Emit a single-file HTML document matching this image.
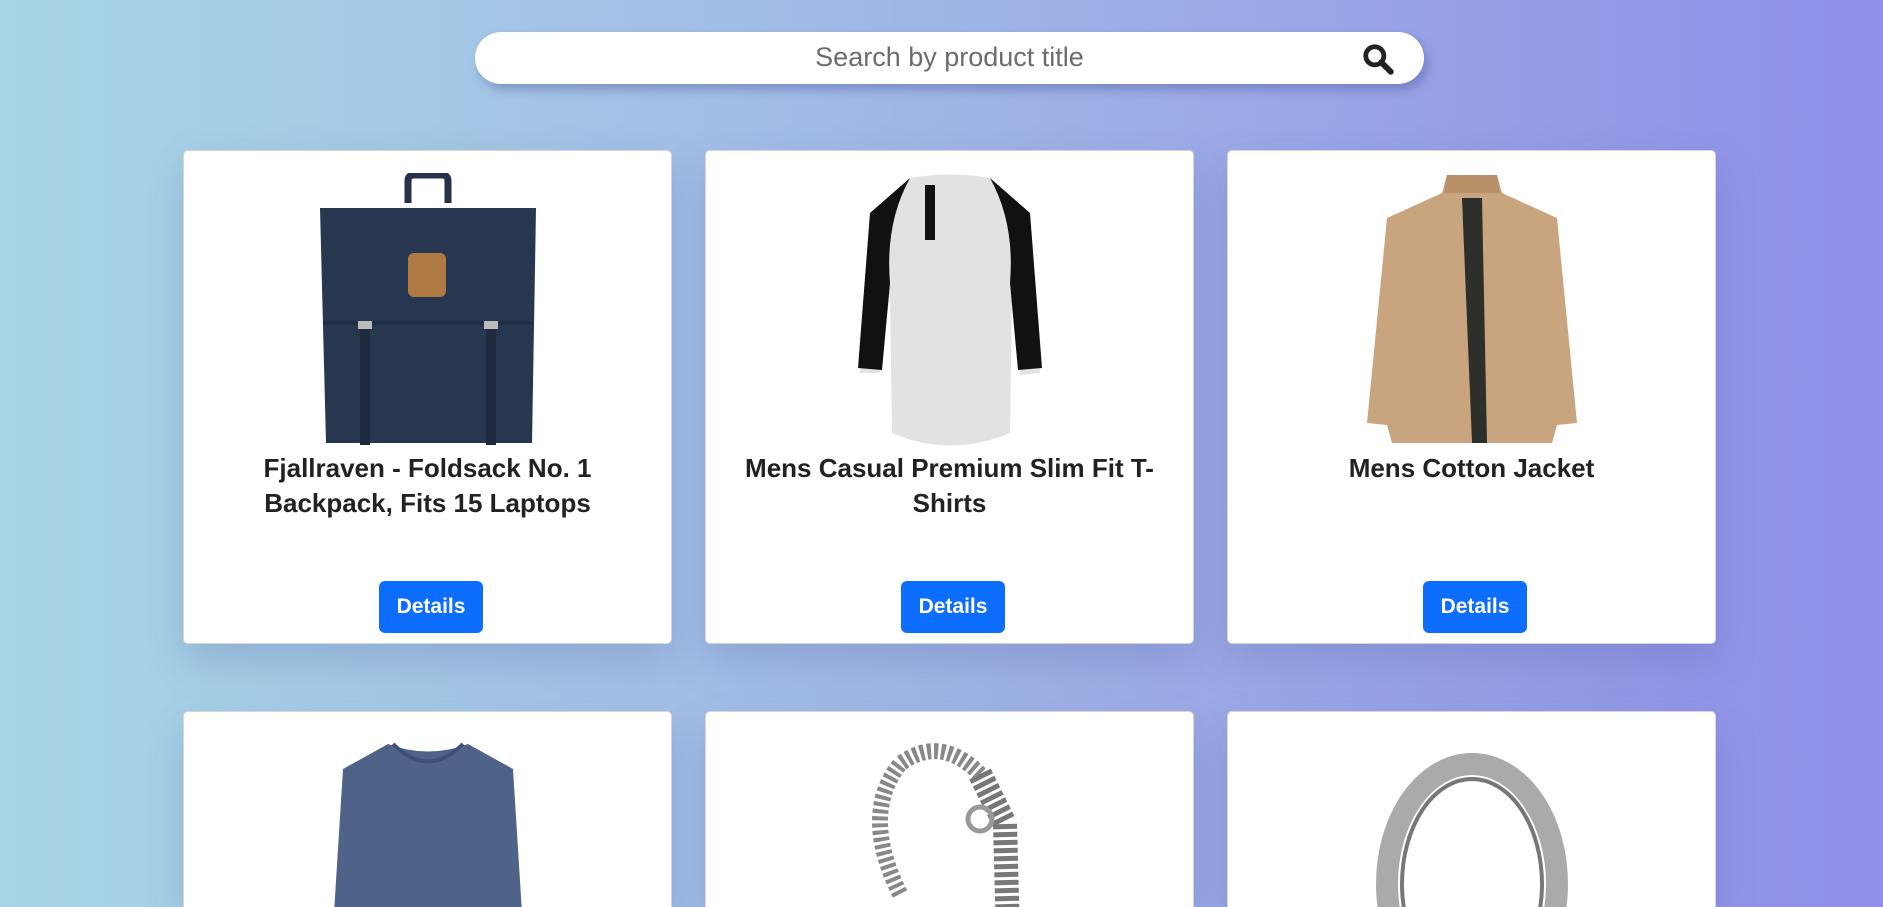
<!DOCTYPE html>
<html style="width:1883px;height:907px;overflow:hidden"><head><style>
*{box-sizing:border-box;margin:0;padding:0}
html,body{width:1883px;height:907px;overflow:hidden}
body{font-family:"Segoe UI","Liberation Sans",sans-serif;background:linear-gradient(90deg,#a8d6e6 0%,#a2bde6 40%,#9aa6e6 70%,#8f8ee8 100%);position:relative}
.search{position:absolute;left:475px;top:32px;width:949px;height:52px;background:#fff;border-radius:26px;box-shadow:4px 6px 10px rgba(60,70,140,.35)}
.search span{position:absolute;left:0;right:0;top:10px;text-align:center;font-size:27px;color:#6c6c6c}
.search svg{position:absolute;right:30px;top:11px}
.card{position:absolute;width:489px;height:494px;background:#fff;border:1px solid #d6d6d6;border-radius:5px;box-shadow:0 18px 40px rgba(80,90,160,.25);overflow:hidden}
.card.r2{height:196px;border-bottom:none;border-radius:5px 5px 0 0}
.card .img{position:absolute;left:0;right:0;top:22px;height:275px;display:flex;justify-content:center}
.card h3{position:absolute;left:20px;right:20px;top:300px;text-align:center;font-size:26px;font-weight:600;line-height:35px;color:#222}
.card .btn{position:absolute;left:195px;top:430px;width:104px;height:52px;background:#0d6efd;color:#fff;border-radius:6px;font-size:21px;font-weight:600;text-align:center;line-height:52px}
</style></head><body>
<div class="search"><span>Search by product title</span>
<svg width="32" height="32" viewBox="0 0 30 30"><circle cx="12" cy="12" r="8.5" fill="none" stroke="#222" stroke-width="4.5"/><line x1="18" y1="18" x2="27" y2="27" stroke="#222" stroke-width="5.5" stroke-linecap="round"/></svg></div>

<div class="card" style="left:183px;top:150px">
<div class="img"><svg width="220" height="275" viewBox="0 0 220 275"><path d="M90 30 V8 Q90 2 96 2 H124 Q130 2 130 8 V30" fill="none" stroke="#25324a" stroke-width="7"/><path d="M2 35 L218 35 L214 270 L8 270 Z" fill="#27374f"/><path d="M5 150 L215 150" stroke="#1f2d42" stroke-width="3"/><rect x="90" y="80" width="38" height="44" rx="6" fill="#b07a45"/><rect x="42" y="152" width="10" height="120" fill="#1e2a3e"/><rect x="168" y="152" width="10" height="120" fill="#1e2a3e"/><rect x="40" y="148" width="14" height="8" fill="#bbb"/><rect x="166" y="148" width="14" height="8" fill="#bbb"/></svg></div>
<h3>Fjallraven - Foldsack No. 1 Backpack, Fits 15 Laptops</h3><div class="btn">Details</div></div>

<div class="card" style="left:705px;top:150px">
<div class="img"><svg width="220" height="275" viewBox="0 0 220 275"><path d="M70 5 Q110 -2 150 5 L190 40 L200 200 L180 202 L172 120 L170 260 Q110 285 52 260 L50 120 L40 200 L20 200 L30 40 Z" fill="#e2e2e2"/><path d="M70 5 L30 40 L18 195 L42 197 L50 110 Q45 50 70 5Z" fill="#111"/><path d="M150 5 L190 40 L202 195 L178 197 L170 110 Q175 50 150 5Z" fill="#111"/><rect x="85" y="12" width="10" height="55" fill="#111"/></svg></div>
<h3>Mens Casual Premium Slim Fit T-Shirts</h3><div class="btn">Details</div></div>

<div class="card" style="left:1227px;top:150px">
<div class="img"><svg width="220" height="275" viewBox="0 0 220 275"><path d="M85 2 H135 L140 20 L195 45 L215 250 L195 252 L190 270 H30 L25 252 L5 250 L25 45 L80 20 Z" fill="#c9a57f"/><path d="M100 25 L120 25 L125 270 L110 270 Z" fill="#2c2f2a"/><path d="M85 2 H135 L138 20 H82Z" fill="#b8906a"/></svg></div>
<h3>Mens Cotton Jacket</h3><div class="btn">Details</div></div>

<div class="card r2" style="left:183px;top:711px">
<div class="img"><svg width="220" height="275" viewBox="0 0 220 275"><path d="M70 10 Q110 25 150 10 L195 35 L210 275 H10 L25 35 Z" fill="#4f6389"/><path d="M75 10 Q110 45 145 10" fill="none" stroke="#3e5075" stroke-width="4"/></svg></div></div>

<div class="card r2" style="left:705px;top:711px">
<div class="img"><svg width="220" height="275" viewBox="0 0 220 275"><path d="M60 160 Q20 80 60 30 Q100 0 140 40" fill="none" stroke="#888" stroke-width="16" stroke-dasharray="4 3"/><path d="M140 40 L165 90 L170 275" fill="none" stroke="#777" stroke-width="24" stroke-dasharray="5 3"/><circle cx="140" cy="85" r="12" fill="none" stroke="#999" stroke-width="5"/></svg></div></div>

<div class="card r2" style="left:1227px;top:711px">
<div class="img"><svg width="220" height="275" viewBox="0 0 220 275"><ellipse cx="110" cy="150" rx="85" ry="120" fill="none" stroke="#aaa" stroke-width="22"/><ellipse cx="110" cy="150" rx="70" ry="105" fill="none" stroke="#777" stroke-width="4"/></svg></div></div>
</body></html>
